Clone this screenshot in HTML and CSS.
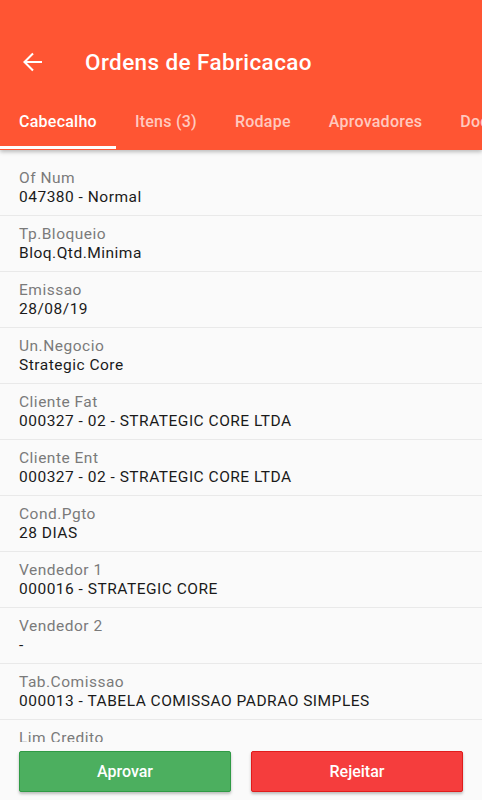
FILE: index.html
```html
<!doctype html>
<html lang="pt">
    <head>
        <meta charset="utf-8">
        <link rel="stylesheet" href="styles.css">
    </head>
    <body>
        <div class="screen">
            <header class="appbar">
                <div class="toolbar">
                    <svg class="back" width="20" height="20" viewBox="0 0 20 20">
                        <path d="M19 10H2M10 1.5L1.5 10L10 18.5" fill="none" stroke="#fff" stroke-width="2.1"/>
                    </svg>
                    <h1 class="title">Ordens de Fabricacao</h1>
                </div>
                <nav class="tabs">
                    <span class="tab active">Cabecalho</span>
                    <span class="tab">Itens (3)</span>
                    <span class="tab">Rodape</span>
                    <span class="tab">Aprovadores</span>
                    <span class="tab">Documentos</span>
                </nav>
            </header>

            <main class="list">
                <div class="row"><span class="label">Of Num</span><span class="value">047380 - Normal</span></div>
                <div class="row"><span class="label">Tp.Bloqueio</span><span class="value">Bloq.Qtd.Minima</span></div>
                <div class="row"><span class="label">Emissao</span><span class="value">28/08/19</span></div>
                <div class="row"><span class="label">Un.Negocio</span><span class="value">Strategic Core</span></div>
                <div class="row"><span class="label">Cliente Fat</span><span class="value">000327 - 02 - STRATEGIC CORE LTDA</span></div>
                <div class="row"><span class="label">Cliente Ent</span><span class="value">000327 - 02 - STRATEGIC CORE LTDA</span></div>
                <div class="row"><span class="label">Cond.Pgto</span><span class="value">28 DIAS</span></div>
                <div class="row"><span class="label">Vendedor 1</span><span class="value">000016 - STRATEGIC CORE</span></div>
                <div class="row"><span class="label">Vendedor 2</span><span class="value">-</span></div>
                <div class="row"><span class="label">Tab.Comissao</span><span class="value">000013 - TABELA COMISSAO PADRAO SIMPLES</span></div>
                <div class="row"><span class="label">Lim Credito</span><span class="value">0,00</span></div>
            </main>

            <footer class="actions">
                <button class="btn approve" type="button">Aprovar</button>
                <button class="btn reject" type="button">Rejeitar</button>
            </footer>
        </div>
    </body>
</html>
```

FILE: styles.css
```css
html,
body {
    margin: 0;
    height: 100%;
}
body {
    font-family: Roboto, 'Noto Sans', sans-serif;
    background: #fafafa;
}
.screen {
    display: flex;
    flex-direction: column;
    height: 800px;
    overflow: hidden;
}

.appbar {
    background: #ff5533;
    color: #fff;
    box-shadow: 0 2px 4px rgba(0, 0, 0, 0.25);
    position: relative;
    z-index: 1;
    flex: none;
}
.toolbar {
    display: flex;
    align-items: center;
    height: 76px;
    padding-top: 24px;
    padding-left: 23px;
}
.back {
    flex: none;
}
.title {
    margin: 0 0 0 42px;
    font-size: 22.5px;
    font-weight: 500;
    letter-spacing: 0.4px;
}

.tabs {
    display: flex;
    height: 50px;
    white-space: nowrap;
}
.tab {
    box-sizing: border-box;
    padding: 0 19px;
    line-height: 43px;
    font-size: 16px;
    font-weight: 500;
    letter-spacing: 0.25px;
    color: rgba(255, 255, 255, 0.7);
    border-bottom: 3px solid transparent;
    height: 49px;
}
.tab.active {
    color: #fff;
    border-bottom-color: #fff;
}

.list {
    flex: 1;
    overflow: hidden;
    padding-top: 10px;
}
.row {
    display: flex;
    flex-direction: column;
    padding: 9px 19px 8px;
    border-bottom: 1px solid #e9e9e9;
    font-size: 15.5px;
    letter-spacing: 0.5px;
    line-height: 19px;
}
.label {
    color: #7a7a7a;
}
.value {
    color: #1a1a1a;
}

.actions {
    flex: none;
    display: grid;
    grid-template-columns: 1fr 1fr;
    gap: 20px;
    padding: 9px 19px 8px;
    background: #fafafa;
}
.btn {
    height: 41px;
    border-radius: 2px;
    font-family: inherit;
    font-size: 16px;
    font-weight: 500;
    color: #fff;
    box-shadow: 0 2px 3px rgba(0, 0, 0, 0.25);
}
.approve {
    background: #4caf5f;
    border: 1px solid #2f9a45;
}
.reject {
    background: #f53d3d;
    border: 1px solid #e01c1c;
}
```
